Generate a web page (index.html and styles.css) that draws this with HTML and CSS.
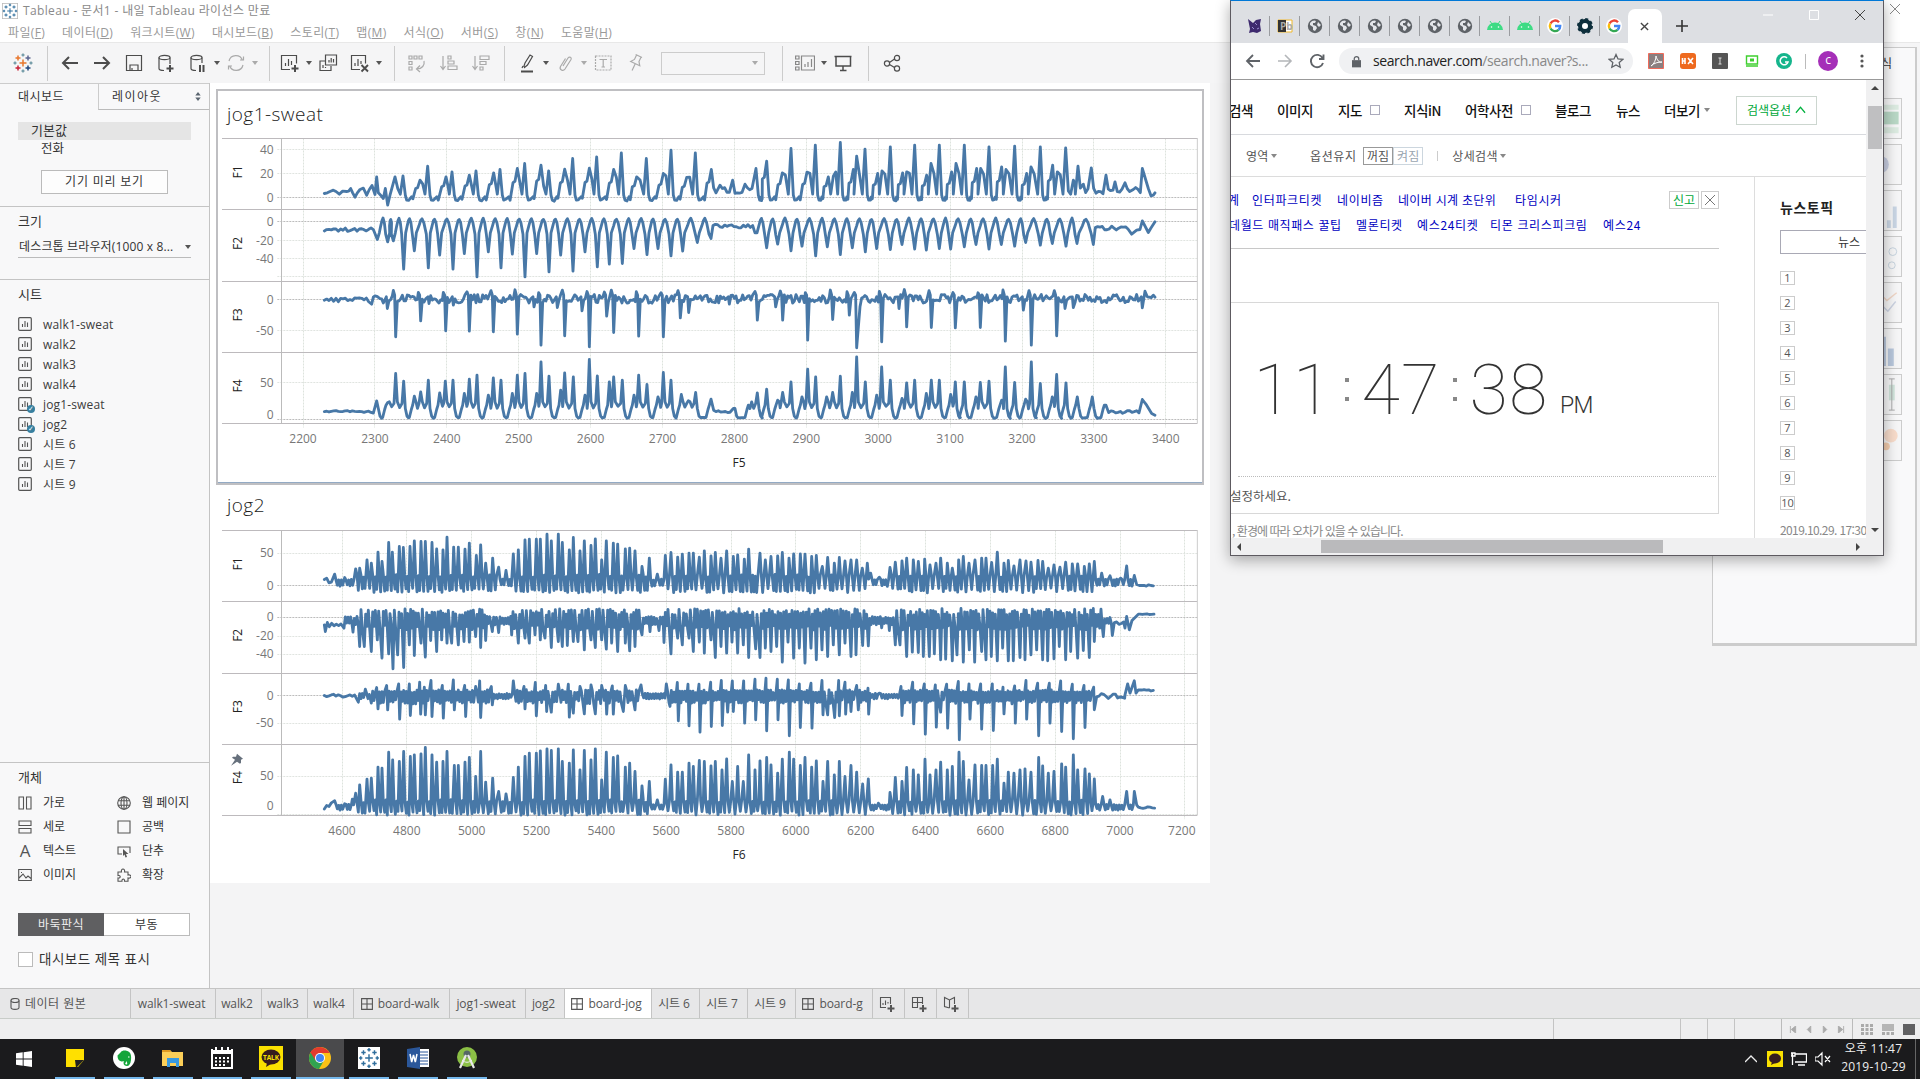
FILE: index.html
```html
<!DOCTYPE html>
<html lang="ko">
<head>
<meta charset="utf-8">
<title>Tableau - 문서1</title>
<link rel="stylesheet" href="styles.css">
</head>
<body>
<svg width="0" height="0" class="defs">
  <defs>
    <symbol id="sheet" viewBox="0 0 14 14"><rect x=".7" y=".7" width="12.6" height="12.6" rx="1" fill="none" stroke="currentColor" stroke-width="1.2"/><path d="M4.5 10V7M7 10V4M9.5 10V5.5" stroke="currentColor" stroke-width="1.1"/></symbol>
    <symbol id="board" viewBox="0 0 12 12"><path d="M.6.6h10.8v10.8H.6zM6 .6v10.8M.6 6h10.8" fill="none" stroke="currentColor"/></symbol>
    <symbol id="globe" viewBox="0 0 16 16"><circle cx="8" cy="8" r="7.2" fill="#5f6368"/><path d="M3 5c2-3 5-3 6-2l-1 2H6v2l3 1 1 2-2 3-2-1V9L3 7zM11 4l3 3-2 2-2-2z" fill="#e4e6ea"/></symbol>
    <symbol id="droid" viewBox="0 0 16 16"><path d="M0 12a8 7.500 0 0 1 16 0z" fill="#3ddc84"/><path d="M3 3l2 3M13 3l-2 3" stroke="#3ddc84"/><circle cx="4.500" cy="9" r=".8" fill="#fff"/><circle cx="11.500" cy="9" r=".8" fill="#fff"/></symbol>
    <symbol id="goog" viewBox="0 0 16 16"><circle cx="8" cy="8" r="8" fill="#fff"/><g fill="none" stroke-width="2.400"><path d="M12 4.200A5.200 5.200 0 0 0 3.500 5.500" stroke="#ea4335"/><path d="M3.500 5.500a5.200 5.200 0 0 0 0 5" stroke="#fbbc05"/><path d="M3.500 10.500a5.200 5.200 0 0 0 8 1.300" stroke="#34a853"/><path d="M11.500 11.800A5 5 0 0 0 13.200 8H8" stroke="#4285f4"/></g></symbol>
    <symbol id="tab" viewBox="0 0 20 20"><g stroke-width="1.500"><path d="M10 6.500v7M6.500 10h7" stroke="#e8762c"/><path d="M5 2.500v5M2.500 5h5" stroke="#e8762c"/><path d="M15 2.500v5M12.500 5h5" stroke="#5b6591"/><path d="M5 12.500v5M2.500 15h5" stroke="#c72037"/><path d="M15 12.500v5M12.500 15h5" stroke="#1f457e"/><path d="M10 .5v3M8.500 2h3M10 16.500v3M8.500 18h3" stroke="#7099a6"/><path d="M2 8.500v3M.5 10h3M18 8.500v3M16.500 10h3" stroke="#7099a6"/></g></symbol>
    <symbol id="tabb" viewBox="0 0 20 20"><path d="M10 6.500v7M6.500 10h7M5 3v4M3 5h4M15 3v4M13 5h4M5 13v4M3 15h4M15 13v4M13 15h4M10 1v3M8.500 2.500h3M10 16v3M8.500 17.500h3M2.500 8.500v3M1 10h3M17.500 8.500v3M16 10h3" stroke="#2f6e9c" stroke-width="1.300"/></symbol>
  </defs>
</svg>

<div class="app">
  <header class="titlebar"><svg class="logo" viewBox="0 0 20 20"><rect x=".5" y=".5" width="19" height="19" fill="#fff" stroke="#bbb"/><use href="#tabb"/></svg><span>Tableau - 문서1 - 내일 Tableau 라이선스 만료</span></header>
  <nav class="menu"><span>파일(<u>F</u>)</span><span>데이터(<u>D</u>)</span><span>워크시트(<u>W</u>)</span><span>대시보드(<u>B</u>)</span><span>스토리(<u>T</u>)</span><span>맵(<u>M</u>)</span><span>서식(<u>O</u>)</span><span>서버(<u>S</u>)</span><span>창(<u>N</u>)</span><span>도움말(<u>H</u>)</span></nav>

  <div class="toolbar">
    <div class="grp g0"><svg viewBox="0 0 20 20"><use href="#tab"/></svg></div>
    <div class="grp g1">
      <svg viewBox="0 0 20 20"><path d="M18 10H3M9 4l-6 6 6 6" stroke-width="2"/></svg>
      <svg viewBox="0 0 20 20"><path d="M2 10h15M11 4l6 6-6 6" stroke-width="2"/></svg>
      <svg viewBox="0 0 20 20"><path d="M2.500 2.500h15v15h-15zM6 17v-5h8v5M8 17v-2"/></svg>
      <svg viewBox="0 0 20 20"><path d="M3 4.500v11c0 1 2 2 5 2M14 4.500V11"/><ellipse cx="8.500" cy="4.500" rx="5.500" ry="2.200"/><path d="M14 12v7M10.500 15.500h7" stroke-width="2"/></svg>
      <svg viewBox="0 0 20 20"><path d="M3 4.500v11c0 1 2 2 5 2M14 4.500V10"/><ellipse cx="8.500" cy="4.500" rx="5.500" ry="2.200"/><path d="M12 12v7M15.500 12v7" stroke-width="2"/></svg>
      <i class="caret"></i>
      <svg class="dim" viewBox="0 0 20 20"><path d="M3 8a7 7 0 0 1 13.500-.5M17 12a7 7 0 0 1-13.500.5M14 7h3.500V3.500M6 13H2.500v3.500"/></svg>
      <i class="caret dim"></i>
    </div>
    <div class="grp g2">
      <svg viewBox="0 0 20 20"><path d="M10 16.500H1.500v-14h15v8M5.500 13v-3M8.500 13V6M11.500 12V8"/><path d="M15 12v7M11.500 15.500h7" stroke-width="2"/></svg>
      <i class="caret"></i>
      <svg viewBox="0 0 20 20"><path d="M7.500 2h11v10h-11zM11 9.500V7M13.200 9.500V5M15.500 9.500V6M7 8H2v9.500h11V13M5 15v-3M7.500 15v-1"/></svg>
      <svg viewBox="0 0 20 20"><path d="M10 16.500H1.500v-14h14v8M5 13v-3M8 13V6M11 11V8"/><path d="M11.500 12l6.500 6.500M18 12l-6.500 6.500" stroke-width="1.900"/></svg>
      <i class="caret"></i>
    </div>
    <div class="grp g3 dim">
      <svg viewBox="0 0 20 20"><path d="M2 3h3v3H2zM7 3h3v3H7zM12 3h3v3h-3zM2 8.500h3v3H2zM2 14h3v3H2zM17 8c1 4-2 8-7 8M13 12.500L9.500 16l3.500 3"/></svg>
      <svg viewBox="0 0 20 20"><path d="M4 3v13M1.500 13L4 16.500 6.500 13M9 3h3v3H9zM9 8h6v3H9zM9 13h9v3.500H9z"/></svg>
      <svg viewBox="0 0 20 20"><path d="M4 3v13M1.500 13L4 16.500 6.500 13M9 3h9v3.500H9zM9 8.500h6v3H9zM9 14h3v3H9z"/></svg>
    </div>
    <div class="grp g4">
      <svg viewBox="0 0 20 20"><path d="M7 13l1-3 5-8 2.500 1.500-5 8.500-3 2.500zM6 13l-1 2"/><path d="M4 18.500h12" stroke-width="2"/></svg>
      <i class="caret"></i>
      <svg class="dim" viewBox="0 0 20 20"><path d="M8 13l5-8c1.500-2 4-.5 3 1.500l-6 9.500c-2 3-6 .5-4.500-2.500l5-8"/></svg>
      <i class="caret dim"></i>
      <svg class="dim" viewBox="0 0 20 20"><rect x="2.500" y="3" width="15.500" height="14" stroke-dasharray="2 1"/><path d="M6.500 6.500h7.500M10.200 6.500V14M8.500 14h3.500"/></svg>
      <svg class="dim" viewBox="0 0 20 20"><g transform="rotate(25 10 10)"><path d="M7 2h7M8 2v5l-2.500 3.500h10L13 7V2M10.500 10.500V18"/></g></svg>
      <div class="select"><i class="caret dim"></i></div>
    </div>
    <div class="grp g5">
      <svg class="mid" viewBox="0 0 20 20"><path d="M.6 3H4v3H.6zM.6 8.500H4v3H.6zM.6 14H4v3H.6zM6.500 3h13v14h-13zM10 14v-3M13 14V9M16.500 14V6"/></svg>
      <i class="caret"></i>
      <svg viewBox="0 0 20 20"><path d="M1.500 3.500h17M3 3.500V13h14.500V3.500M10 13v4.500M7 17.500h6.500" stroke-width="1.500"/></svg>
    </div>
    <div class="grp g6"><svg viewBox="0 0 20 20"><circle cx="5" cy="10.500" r="2.600"/><circle cx="15" cy="5" r="2.600"/><circle cx="15" cy="15.500" r="2.600"/><path d="M7.500 9.500L12.500 6M7.500 11.500l5 3"/></svg></div>
  </div>

  <div class="work">
    <aside class="side">
      <div class="ptabs"><div class="on">대시보드</div><div class="off"><span>레이아웃</span><svg viewBox="0 0 6 10" width="6" height="9"><path d="M3 0l3 4H0zM0 6h6L3 10z" fill="#5a6570"/></svg></div></div>
      <section class="dev"><div class="def">기본값</div><div class="tel">전화</div><div class="btn">기기 미리 보기</div></section>
      <section class="size"><h4>크기</h4><div class="dd"><span>데스크톱 브라우저(1000 x 8...</span><i class="caret"></i></div></section>
      <section class="sheets"><h4>시트</h4><ul>
        <li><svg><use href="#sheet"/></svg>walk1-sweat</li><li><svg><use href="#sheet"/></svg>walk2</li><li><svg><use href="#sheet"/></svg>walk3</li><li><svg><use href="#sheet"/></svg>walk4</li>
        <li class="used"><svg><use href="#sheet"/></svg>jog1-sweat</li><li class="used"><svg><use href="#sheet"/></svg>jog2</li>
        <li><svg><use href="#sheet"/></svg>시트 6</li><li><svg><use href="#sheet"/></svg>시트 7</li><li><svg><use href="#sheet"/></svg>시트 9</li></ul></section>
      <section class="objs"><h4>개체</h4>
        <div class="ogrid">
          <div><svg viewBox="0 0 14 14"><path d="M1 1h4.500v12H1zM8.500 1H13v12H8.500z"/></svg>가로</div><div><svg viewBox="0 0 14 14"><circle cx="7" cy="7" r="6.300"/><ellipse cx="7" cy="7" rx="3" ry="6.300"/><path d="M7 .7v12.600M1 4.700h12M1 9.300h12"/></svg>웹 페이지</div>
          <div><svg viewBox="0 0 14 14"><path d="M1 1h12v4.500H1zM1 8.500h12V13H1z"/></svg>세로</div><div><svg viewBox="0 0 14 14"><path d="M1 1h12v12H1z"/></svg>공백</div>
          <div><span class="A">A</span>텍스트</div><div><svg viewBox="0 0 14 14"><path d="M5 10H1V3h12v6"/><path d="M6 5l5.500 5H9l1 3-1.500.5-1-3L6 12z" fill="#555" stroke="none"/></svg>단추</div>
          <div><svg viewBox="0 0 14 14"><path d="M.7 1.500h12.600v11H.7zM1 10l4-4 3 4 2-2 3 2.500M3 4.500h1"/></svg>이미지</div><div><svg viewBox="0 0 14 14"><path d="M1 4h3.500c-1-4 4-4 3 0H11v3c4-1 4 4 0 3v3.300H7.500c.5-3-3-3-2.500 0H1V10c3 .5 3-3 0-2.500z"/></svg>확장</div>
        </div>
        <div class="seg"><b>바둑판식</b><span>부동</span></div>
        <label class="chk"><i></i>대시보드 제목 표시</label>
      </section>
    </aside>
    <main class="canvas"><div class="dash">
      <div class="zone sel"><h2>jog1-sweat</h2><svg class="chart" id="c1" width="976" height="342"></svg></div>
      <div class="zone"><h2>jog2</h2><svg class="chart" id="c2" width="976" height="342"></svg></div>
    </div></main>
  </div>

  <div class="sheetbar">
    <div class="w130 src"><svg viewBox="0 0 10 12"><ellipse cx="5" cy="2.500" rx="4" ry="2"/><path d="M1 2.500v7c0 2.500 8 2.500 8 0v-7"/></svg>데이터 원본</div>
    <div class="w85">walk1-sweat</div><div class="w46">walk2</div><div class="w46">walk3</div><div class="w46">walk4</div>
    <div class="w96"><svg><use href="#board"/></svg>board-walk</div><div class="w76">jog1-sweat</div><div class="w39">jog2</div>
    <div class="w87 cur"><svg><use href="#board"/></svg>board-jog</div><div class="w48">시트 6</div><div class="w48">시트 7</div><div class="w48">시트 9</div>
    <div class="w77"><svg><use href="#board"/></svg>board-g</div>
    <div class="w32"><svg class="add" viewBox="0 0 16 16"><path d="M7 11.500H1.500v-10h10V8M4 9V7M6.500 9V4.500M9 7.500V6"/><path d="M12 9v7M8.500 12.500h7" stroke-width="2"/></svg></div>
    <div class="w32"><svg class="add" viewBox="0 0 16 16"><path d="M7 11.500H1.500v-10h10V8M1.500 6.500h10M6.500 1.500v10"/><path d="M12 9v7M8.500 12.500h7" stroke-width="2"/></svg></div>
    <div class="w32"><svg class="add" viewBox="0 0 16 16"><path d="M6.500 12L1.500 10.500V1.500L6.500 4l5-2.500V8M6.500 4v8"/><path d="M12 9v7M8.500 12.500h7" stroke-width="2"/></svg></div>
  </div>
  <div class="status"><i class="s127"></i><i class="s27"></i><i class="s27"></i><i class="s47"></i>
    <div class="nav"><svg viewBox="0 0 8 8"><path d="M1 0v8M7 0L2 4l5 4z"/></svg><svg viewBox="0 0 8 8"><path d="M6 0L2 4l4 4z"/></svg><svg viewBox="0 0 8 8"><path d="M2 0l4 4-4 4z"/></svg><svg viewBox="0 0 8 8"><path d="M7 0v8M1 0l5 4-5 4z"/></svg></div>
    <div class="views"><svg viewBox="0 0 12 11"><path d="M0 1.500h12M0 5.500h12M0 9.500h12" stroke="#aaa" stroke-width="3" stroke-dasharray="3 1.500"/></svg><svg viewBox="0 0 12 11"><path d="M0 0h12v7H0z" fill="#b5b5b5"/><path d="M0 9.500h12" stroke="#aaa" stroke-width="3" stroke-dasharray="3 1.500"/></svg><svg viewBox="0 0 12 11"><path d="M0 0h12v11H0z" fill="#606062"/></svg></div>
  </div>

  <footer class="task">
    <div class="ti start"><svg viewBox="0 0 16 16"><path d="M0 2.300L6.700 1.300v6.200H0zM7.600 1.200L16 0v7.500H7.600zM0 8.400h6.700v6.300L0 13.700zM7.600 8.400H16V16l-8.400-1.200z" fill="#fff"/></svg></div>
    <div class="ti run"><svg viewBox="0 0 22 22"><path d="M2 2h18v11l-6 7H2z" fill="#ffe000"/><path d="M11 13h9l-8 8z" fill="#222"/></svg></div>
    <div class="ti run"><svg viewBox="0 0 22 22"><circle cx="11" cy="11" r="11" fill="#fff"/><path d="M4.500 8.500L8 5c1-2 6-2 8 0 2 1 2.500 5 2 8-.5 4-2 6-4 6s-3.500-1-3.500-3 1.500-2 2.500-2v1.500c-1 0-1.200 2 .5 2 1 0 1-2 0-3-1-1-3 0-5 0-3-.5-4-3-4-6z" fill="#14a53a"/><path d="M15 10h1.500" stroke="#fff"/></svg></div>
    <div class="ti run"><svg viewBox="0 0 22 22"><path d="M0 3h8l2 2h11v14H0z" fill="#fccf58"/><path d="M0 3h8l1 2H0z" fill="#e09b22"/><path d="M5 20v-9h12v9h-3v-4H8v4z" fill="#3a9ae0"/></svg></div>
    <div class="ti run"><svg viewBox="0 0 22 22"><path d="M1 2v19h20V2M1 4h20M1 6h20" fill="none" stroke="#fff" stroke-width="2"/><path d="M5 0v5M11 0v5M17 0v5" stroke="#fff" stroke-width="2"/><path d="M4 11h14M4 14.500h14M4 18h10" stroke="#fff" stroke-width="1.800" stroke-dasharray="2 2"/></svg></div>
    <div class="ti run"><svg class="talk" viewBox="0 0 24 24"><path d="M0 0h24v24H0z" fill="#fae100"/><ellipse cx="12" cy="11" rx="9.500" ry="7.500" fill="#371d1e"/><path d="M8 17l-1 4 5-3z" fill="#371d1e"/><text x="12" y="13.500" text-anchor="middle" font-size="6.500" font-weight="700" fill="#fae100">TALK</text></svg></div>
    <div class="ti run active"><svg viewBox="0 0 22 22"><circle cx="11" cy="11" r="11" fill="#fbc116"/><path d="M11 11L1.500 5.500A11 11 0 0 1 20.500 6H11z" fill="#e33b2e"/><path d="M1.500 5.500A11 11 0 0 0 10 22l5-8.500L11 11z" fill="#31a350"/><path d="M1.500 5.500L7 14l4-8h9.500A11 11 0 0 0 1.500 5.500z" fill="#e33b2e"/><circle cx="11" cy="11" r="5" fill="#fff"/><circle cx="11" cy="11" r="4" fill="#4285f4"/></svg></div>
    <div class="ti run"><svg viewBox="0 0 20 20"><path d="M0 0h20v20H0z" fill="#fff"/><use href="#tabb"/></svg></div>
    <div class="ti run"><svg viewBox="0 0 22 22"><path d="M9 2h13v18H9z" fill="#fff"/><path d="M13 5h8M13 8h8M13 11h8M13 14h8M13 17h8" stroke="#2b579a"/><path d="M0 2l13-2v22L0 20z" fill="#2b579a"/><path d="M3 7l1.700 8L6.500 8l1.800 7L10 7" fill="none" stroke="#fff" stroke-width="1.500"/></svg></div>
    <div class="ti run"><svg viewBox="0 0 22 22"><circle cx="11" cy="10" r="10" fill="#8bbf45"/><circle cx="11" cy="7" r="3.500" fill="#566"/><path d="M10 8L4 21M12 8l6 13" stroke="#e8e8e8" stroke-width="2.200"/><path d="M6 13c3 3 7 3 10 0" stroke="#eee" fill="none"/></svg></div>
    <div class="tray"><svg class="up" viewBox="0 0 12 8"><path d="M0 7l6-6 6 6" fill="none" stroke="#eee" stroke-width="1.300"/></svg><svg viewBox="0 0 16 16"><path d="M0 0h16v16H0z" fill="#fae100"/><ellipse cx="8" cy="7.500" rx="6" ry="5" fill="#371d1e"/><path d="M5 11l-1 3 4-2z" fill="#371d1e"/></svg><svg viewBox="0 0 16 16"><path d="M4 3h11.500v8H4M7 14h7M1.500 2v12M0 2h4v3H0z" fill="none" stroke="#fff" stroke-width="1.300"/></svg><svg viewBox="0 0 16 16"><path d="M0 6h3l4-4v12L3 10H0zM10 5l5 6M15 5l-5 6" fill="none" stroke="#fff" stroke-width="1.200"/></svg></div>
    <div class="clock"><span>오후 11:47</span><span>2019-10-29</span></div>
  </footer>
</div>

<svg class="mainx" viewBox="0 0 10 10"><path d="M0 0l10 10M10 0L0 10" stroke="#888"/></svg>
<div class="showme"><h5>표현 방식</h5><div class="thumbs">
  <div><svg viewBox="0 0 34 40"><path d="M4 6h28v5H4zM4 29h28v6H4z" fill="#dcebe1"/><path d="M4 13h28v13H4z" fill="#b9d8c6"/></svg></div>
  <div><svg viewBox="0 0 34 40"><circle cx="13" cy="20" r="9" fill="#c9cfe2"/></svg></div>
  <div><svg viewBox="0 0 34 40"><path d="M20 30h4v8h-4zM26 16h4v22h-4z" fill="#c9d5e4"/></svg></div>
  <div><svg viewBox="0 0 34 40"><circle cx="26" cy="15" r="4" fill="none" stroke="#c5d3de"/><circle cx="25" cy="29" r="3.500" fill="none" stroke="#c5d3de"/></svg></div>
  <div><svg viewBox="0 0 34 40"><path d="M16 14l4 4 10-8" fill="none" stroke="#f0d6c6" stroke-width="1.500"/><path d="M16 24l5 5 8-10" fill="none" stroke="#ccd3e2" stroke-width="1.500"/></svg></div>
  <div><svg viewBox="0 0 34 40"><path d="M21 20h6v18h-6zM15 8h4v30h-4z" fill="#b9c8dd"/></svg></div>
  <div><svg viewBox="0 0 34 40"><path d="M22 10h6v16h-6z" fill="#cfe3da"/><path d="M25 4v32M22 4h6M22 36h6" stroke="#aaa"/></svg></div>
  <div><svg viewBox="0 0 34 40"><circle cx="24" cy="15" r="7" fill="#f8dccb"/><circle cx="19" cy="26" r="4" fill="#f4cdae"/></svg></div>
</div></div>

<div class="browser">
  <div class="strip">
    <div class="fav"><svg viewBox="0 0 16 16"><path d="M1 1l5 4 3-3 5-1-1 5 1 7-4 2-4-1-4 1 1-4z" fill="#3e2a6e"/><path d="M8 5l2 2M5 9l2 2M10 11l2-1" stroke="#9b8fd0"/></svg></div>
    <div class="fav"><svg viewBox="0 0 16 16"><path d="M1 2h14v12H1z" fill="#fff" stroke="#f0b72a"/><path d="M1 2h8v12H1z" fill="#333"/><text x="3" y="12" font-size="10" font-weight="700" fill="#aaa">Pb</text></svg></div>
    <div class="fav"><svg><use href="#globe"/></svg></div><div class="fav"><svg><use href="#globe"/></svg></div><div class="fav"><svg><use href="#globe"/></svg></div><div class="fav"><svg><use href="#globe"/></svg></div><div class="fav"><svg><use href="#globe"/></svg></div><div class="fav"><svg><use href="#globe"/></svg></div>
    <div class="fav"><svg><use href="#droid"/></svg></div><div class="fav"><svg><use href="#droid"/></svg></div><div class="fav"><svg><use href="#goog"/></svg></div>
    <div class="fav"><svg viewBox="0 0 16 16"><circle cx="8" cy="8" r="5" fill="#fff" stroke="#0e2f3c" stroke-width="4"/><circle cx="8" cy="8" r="7" fill="none" stroke="#0e2f3c" stroke-width="2" stroke-dasharray="3 2.500"/></svg></div>
    <div class="fav last"><svg><use href="#goog"/></svg></div>
    <div class="atab"><svg viewBox="0 0 10 10"><path d="M1 1l8 8M9 1L1 9" stroke="#444" stroke-width="1.500"/></svg></div>
    <svg class="plus" viewBox="0 0 12 12"><path d="M6 0v12M0 6h12" stroke="#333" stroke-width="1.600"/></svg>
    <div class="wc"><svg viewBox="0 0 10 10"><path d="M0 5h10" stroke="#fff"/></svg><svg viewBox="0 0 10 10"><path d="M.5.500h9v9h-9z" fill="none" stroke="#fff"/></svg><svg viewBox="0 0 10 10"><path d="M0 0l10 10M10 0L0 10" stroke="#444"/></svg></div>
  </div>
  <div class="addr">
    <svg viewBox="0 0 16 16"><path d="M15 8H2M8 2L2 8l6 6" stroke="#5f6368" stroke-width="1.800"/></svg>
    <svg viewBox="0 0 16 16"><path d="M1 8h13M8 2l6 6-6 6" stroke="#b4b6b9" stroke-width="1.600"/></svg>
    <svg viewBox="0 0 16 16"><path d="M13.500 5A6.200 6.200 0 1 0 14 10M14.500 1.500V6H10" stroke="#5f6368" stroke-width="1.900"/></svg>
    <div class="omni"><svg class="lock" viewBox="0 0 10 13"><path d="M0 5h10v8H0z" fill="#5f6368"/><path d="M2.500 5V3.500a2.500 2.500 0 0 1 5 0V5" stroke="#5f6368" stroke-width="1.400"/></svg><span class="url">search.naver.com<em>/search.naver?s...</em></span><svg viewBox="0 0 16 16"><path d="M8 1.500l2 4.400 4.800.5-3.600 3.200 1 4.700L8 11.900l-4.200 2.400 1-4.700L1.200 6.400 6 5.900z" stroke="#5f6368" stroke-width="1.300"/></svg></div>
    <svg viewBox="0 0 16 16"><path d="M.5.500h15v15H.5z" fill="#8a7f80" stroke="#f06a5a"/><path d="M3 13c3-2 5-6 5-10 1 4 3 7 6 6-4 0-8 1-11 4" stroke="#fff"/></svg>
    <svg viewBox="0 0 16 16"><rect width="16" height="16" rx="3" fill="#ee6a1f"/><path d="M2.500 5v6M5 5v6M2 8h3M8 5l5 6M13 5l-5 6" stroke="#fff" stroke-width="1.600"/></svg>
    <svg viewBox="0 0 16 16"><rect width="16" height="16" rx="1" fill="#555"/><path d="M8 5v6M6.500 5h3M6.500 11h3" stroke="#ddd"/></svg>
    <svg viewBox="0 0 16 16"><path d="M2.500 3h11v8h-11zM2 13h12" stroke="#3fcf2f" stroke-width="1.400"/><path d="M6 5.500h4v3H6z" fill="#3fcf2f"/></svg>
    <svg viewBox="0 0 16 16"><circle cx="8" cy="8" r="8" fill="#15b58c"/><path d="M11 5a4 4 0 1 0 1 4H9" stroke="#fff" stroke-width="1.500"/></svg>
    <i class="vs"></i><span class="ava">c</span>
    <svg class="dots" viewBox="0 0 4 16"><circle cx="2" cy="3" r="1.600" fill="#555"/><circle cx="2" cy="8" r="1.600" fill="#555"/><circle cx="2" cy="13" r="1.600" fill="#555"/></svg>
  </div>
  <div class="view">
    <div class="page">
      <div class="gnb"><span class="n0">검색</span><span class="n1">이미지</span><span class="n2">지도<i></i></span><span class="n3">지식iN</span><span class="n4">어학사전<i></i></span><span class="n5">블로그</span><span class="n6">뉴스</span><span class="n7">더보기<b class="tri"></b></span><span class="opt">검색옵션<svg viewBox="0 0 12 8"><path d="M1 7l5-6 5 6" fill="none" stroke="#00b13e" stroke-width="1.300"/></svg></span></div>
      <div class="opts"><span class="o1">영역<b class="tri"></b></span><span class="o2">옵션유지</span><span class="tg"><b>꺼짐</b><em>켜짐</em></span><i></i><span class="o3">상세검색<b class="tri"></b></span></div>
      <div class="cols">
        <div class="left">
          <div class="rel"><div class="lk r1"><a>계</a><a class="l1">인터파크티켓</a><a class="l2">네이비즘</a><a class="l3">네이버 시계 초단위</a><a class="l4">타임시커</a><span class="rep">신고</span><span class="cls"><svg viewBox="0 0 10 10"><path d="M0 0l10 10M10 0L0 10" stroke="#777"/></svg></span></div>
            <div class="lk r2"><a class="m0">데월드 매직패스 꿀팁</a><a class="m1">멜론티켓</a><a class="m2">예스24티켓</a><a class="m3">티몬 크리스피크림</a><a class="m4">예스24</a></div></div>
          <div class="time"><div class="face"><span>1</span><span>1</span><i></i><span>4</span><span>7</span><i></i><span>3</span><span>8</span><em>PM</em></div><p>설정하세요.</p></div>
          <p class="note">, 환경에 따라 오차가 있을 수 있습니다.</p>
        </div>
        <div class="right"><h6>뉴스토픽</h6><div class="ntab">뉴스</div><ol><li>1</li><li>2</li><li>3</li><li>4</li><li>5</li><li>6</li><li>7</li><li>8</li><li>9</li><li>10</li></ol><p>2019.10.29. 17:30</p></div>
      </div>
    </div>
    <div class="vbar"><i class="au"></i><div></div><i class="ad"></i></div>
  </div>
  <div class="hbar"><i class="al"></i><div></div><i class="ar"></i></div>
</div>
<script src="charts.js"></script>
</body>
</html>
```
FILE: styles.css
```css
*{box-sizing:border-box}
body{margin:0;width:1920px;height:1079px;overflow:hidden;position:relative;font:12px/16px "Open Sans","Noto Sans CJK KR",sans-serif;color:#333;background:#f4f4f5}
h2,h4,h5,h6,p,ul,ol{margin:0;padding:0;font-weight:400}
ul,ol{list-style:none}
svg{display:block;flex:none}
.defs{position:absolute}
.app{display:flex;flex-direction:column;height:1079px}
.titlebar{height:21px;background:#fff;display:flex;align-items:center;gap:5px;padding-left:2px;color:#8a8a8a;letter-spacing:.35px}
.logo{width:16px;height:16px}
.menu{height:21px;background:#fff;display:flex;align-items:center;padding:2px 0 0 8px;gap:17px;color:#999;white-space:nowrap;letter-spacing:.35px}
.toolbar{height:41px;background:#f5f5f6;border-top:1px solid #e8e8e8;display:flex;align-items:center}
.grp{display:flex;align-items:center;gap:12px;height:35px;border-right:1px solid #ccc}
.grp svg{width:20px;height:20px;fill:none;stroke:#4c4c4c;stroke-width:1.2}
.grp .dim,.grp.dim svg{stroke:#aaa;border-top-color:#aaa}
.grp .mid{stroke:#888}
.g0{width:48px;padding-left:13px}.g1{width:222px;padding-left:12px}.g2{width:125px;padding-left:10px}.g3{width:110px;padding-left:12px}.g4{width:278px;padding-left:12px}.g5{width:86px;padding-left:12px}.g6{border:0;padding-left:13px}
.caret{flex:none;width:0;height:0;border:3px solid transparent;border-top:4px solid #555;border-bottom:0;margin:0 -6px 0 -6px}
.select{width:104px;height:23px;border:1px solid #ccc;display:flex;align-items:center;justify-content:flex-end;padding-right:12px;margin-left:4px}
.work{flex:1;display:flex;min-height:0}
.side{width:210px;border-right:1px solid #c4c4c4;background:#f8f8f9;display:flex;flex-direction:column;color:#333}
.ptabs{display:flex;height:27px;border-top:1px solid #ccc}
.ptabs .on{width:98px;padding:5px 0 0 18px;letter-spacing:.5px}
.ptabs .off{flex:1;border-left:1px solid #ccc;border-bottom:1px solid #bbb;padding:5px 8px 0 13px;display:flex;justify-content:space-between;letter-spacing:1.5px}
.ptabs svg{margin-top:3px}
.side section{border-bottom:1px solid #c4c4c4}
.dev{height:97px;padding:12px 18px}
.def{background:#e5e5e5;height:18px;line-height:17px;padding-left:13px;font-size:13px}
.tel{padding-left:23px;height:18px;line-height:18px;font-size:12.500px}
.btn{margin:12px 4px 0 23px;width:127px;height:24px;border:1px solid #bbb;background:#fdfdfd;text-align:center;line-height:21px;letter-spacing:.8px}
.size{height:73px;padding:6px 18px}
h4{font-size:13px;line-height:17px}
.dd{display:flex;align-items:center;justify-content:space-between;border-bottom:1px solid #bbb;height:21px;margin-top:7px;padding:0 6px 0 1px;white-space:nowrap}
.dd span{letter-spacing:.15px}
.sheets{height:483px;padding:6px 18px}
.sheets ul{margin-top:11px}
.sheets li{height:20px;display:flex;align-items:center;gap:11px;position:relative;color:#3c3c3c;padding-top:1px;letter-spacing:.15px}
.sheets li svg{width:14px;height:14px;color:#555;margin-top:-1px}
.used::after{content:"✓";position:absolute;left:9px;top:11px;width:8px;height:8px;border-radius:50%;background:#377f9f;color:#fff;font:7px/8px "DejaVu Sans",sans-serif;text-align:center}
.side .objs{flex:1;border:0;padding:6px 18px}
.ogrid{display:grid;grid-template-columns:98px 1fr;grid-auto-rows:24px;margin-top:5px}
.ogrid div{display:flex;align-items:center;gap:11px;white-space:nowrap;font-size:12px}
.ogrid div:nth-child(even){padding-left:1px}
.ogrid svg{width:14px;height:14px;fill:none;stroke:#555;stroke-width:1.1}
.A{width:14px;font-size:17px;text-align:center;color:#555}
.seg{display:flex;margin-top:26px;height:23px;width:172px;line-height:21px;text-align:center;border:1px solid #bbb;background:#fff;letter-spacing:.4px}
.seg b{width:86px;background:#5f5f61;color:#eee;font-weight:400;margin:-1px 0 -1px -1px;line-height:23px}
.seg span{flex:1}
.chk{display:flex;align-items:center;gap:6px;margin-top:15px;font-size:13.500px;letter-spacing:.5px;white-space:nowrap}
.chk i{width:15px;height:15px;border:1px solid #bbb;background:#fff}
.canvas{flex:1;background:#f4f4f5}
.dash{width:1000px;height:800px;background:#fff;padding:6px}
.zone{width:988px;height:396px;padding:6px 5px;border:1px solid transparent}
.sel{border:2px solid #bfbfc2;padding:5px 4px;box-shadow:inset 0 -1px #93aac4}
.zone h2{font-size:19px;line-height:36px;height:42px;padding-left:5px;color:#222;font-family:"Open Sans",sans-serif;font-weight:300;letter-spacing:.45px}
.zone:not(.sel) h2{margin-top:-6px;height:44px;line-height:38px}
.chart text{font-family:"Open Sans",sans-serif}
.ax{font-size:12px;fill:#777}
.lab{font-size:12px;fill:#222}
.sheetbar{height:30px;border-top:1px solid #c4c4c4;background:#e7e7e8;display:flex;color:#555}
.sheetbar div{flex:none;border-right:1px solid #c4c4c4;display:flex;align-items:center;justify-content:center;gap:5px;white-space:nowrap;padding-right:3px;letter-spacing:-.1px}
.sheetbar .src{justify-content:flex-start;padding-left:9px;gap:4px;letter-spacing:.5px}
.sheetbar svg{width:12px;height:12px;fill:none;stroke:#555;stroke-width:1.1}
.sheetbar .add{width:16px;height:16px}
.sheetbar .cur{background:#fff}
.w130{width:131px}.w85{width:85px}.w46{width:46px}.w96{width:96px}.w76{width:76px}.w39{width:39px}.w87{width:87px}.w48{width:48px}.w77{width:77px}.w32{width:32px}
.status{height:21px;border-top:1px solid #c8ccc8;background:#eeeeef;display:flex;padding-left:1553px}
.status i{border-left:1px solid #c4c4c4}
.s127{width:127px}.s27{width:27px}.s47{width:47px}
.nav{width:71px;border-left:1px solid #bbb;display:flex;align-items:center;gap:8px;padding-left:7px}
.nav svg{width:8px;height:7px;fill:#aaa;stroke:#aaa}
.views{border-left:1px solid #bbb;display:flex;align-items:center;gap:9px;padding-left:8px}
.views svg{width:12px;height:11px}
.task{height:40px;background:#1b1b1d;display:flex}
.ti{width:40px;margin-right:9px;display:flex;align-items:center;justify-content:center;flex:none}
.ti svg{width:22px;height:22px}
.ti .talk{width:24px;height:24px}
.ti.start{width:48px;margin-right:7px}
.start svg{width:16px;height:16px}
.run{border-bottom:2px solid #76b9ed}
.active{width:48px;margin-left:-4px;margin-right:5px;background:#4a4a4c}
.tray{margin-left:auto;display:flex;align-items:center;gap:8px}
.tray svg{width:16px;height:16px}
.tray .up{width:12px;height:8px;margin-right:2px}
.clock{width:78px;margin:0 4px 0 7px;border-right:1px solid #666;color:#eee;display:flex;flex-direction:column;align-items:center;line-height:18px;padding:1px 6px 0 0;letter-spacing:.2px}
.mainx{position:absolute;left:1890px;top:4px;width:10px;height:10px}
.showme{position:absolute;left:1712px;top:47px;width:205px;height:599px;background:#f9f9fa;border:1px solid #ccc;border-right-width:2px;border-bottom:3px solid #ccc}
.showme h5{height:50px;padding:7px 23px;text-align:right;font-size:12px;line-height:17px}
.thumbs{display:flex;flex-direction:column;gap:5px;align-items:flex-end;padding-right:13px}
.thumbs div{width:36px;height:41px;border:1px solid #ccc;background:#f6f6f7}
.thumbs svg{width:34px;height:39px}
.browser{position:absolute;left:1230px;top:0;width:654px;height:556px;border:1px solid #5d5a60;border-top:1px solid #0078d7;background:#fff;display:flex;flex-direction:column;box-shadow:0 4px 14px rgba(0,0,0,.33)}
.strip{height:42px;background:#dddfe3;display:flex;padding-left:9px;align-items:center}
.fav{width:30px;height:20px;margin-top:8px;border-right:1px solid #9a9ca0;display:flex;align-items:center;justify-content:center}
.fav.last{border:0;width:28px}
.fav svg{width:16px;height:16px}
.atab{width:34px;height:34px;margin-top:8px;background:#fff;border-radius:7px 7px 0 0;display:flex;align-items:center;justify-content:center;padding-right:2px}
.atab svg{width:9px;height:9px}
.plus{width:12px;height:12px;margin:8px 0 0 14px}
.wc{display:flex;gap:36px;margin:-14px 18px 0 auto}
.wc svg{width:10px;height:10px}
.addr{height:37px;border-bottom:1px solid #999;display:flex;align-items:center;gap:16px;padding-left:14px}
.addr svg{width:16px;height:16px;fill:none}
.omni{width:294px;height:26px;border-radius:13px;background:#f0f1f3;display:flex;align-items:center;margin:0 -1px 0 -2px;padding:0 9px 0 13px}
.addr .lock{width:9px;height:13px}
.url{flex:1;padding-left:12px;font-size:14px;letter-spacing:-.4px;color:#222}
.url em{font-style:normal;color:#888}
.vs{height:15px;border-left:1px solid #bbb;margin-left:-3px}
.ava{width:20px;height:20px;border-radius:50%;background:#a52fb8;color:#fff;text-align:center;line-height:18px;margin-left:-4px}
.addr .dots{width:4px;margin-left:6px}
.view{display:flex;height:458px}
.page{width:635px;overflow:hidden;white-space:nowrap;font-family:"Noto Sans CJK KR",sans-serif}
.gnb{height:55px;border-bottom:1px solid #d8dade;display:flex;align-items:center;padding-top:6px;font-size:13.500px;color:#111;font-weight:500;letter-spacing:-.4px}
.gnb>span{display:flex;align-items:center;flex:none}
.gnb i{width:10px;height:10px;border:1px solid #aab;margin-left:8px}
.n0{width:46px}.n0{text-indent:-2px}.n1{width:61px}.n2{width:66px}.n3{width:61px}.n4{width:90px}.n5{width:61px}.n6{width:48px}.n7{width:72px}
.tri{border:3px solid transparent;border-top:4px solid #888;border-bottom:0;margin-left:4px}
.gnb .opt{width:81px;height:29px;border:1px solid #ccd6cf;color:#00a83a;font-size:12px;justify-content:center;gap:4px;font-weight:400;letter-spacing:0}
.opt svg{width:11px;height:8px}
.opts{height:42px;border-bottom:1px solid #dcdcdc;display:flex;align-items:center;font-size:12px;color:#555}
.opts span{display:flex;align-items:center}
.opts .tri{margin-left:2px}
.o1{width:64px;margin-left:15px;letter-spacing:.3px}.o2{width:53px;letter-spacing:.6px}.o3{letter-spacing:.4px}
.tg{line-height:16px}
.tg b,.tg em{font:inherit;border:1px solid #999;padding:0 3px;height:18px}
.tg em{color:#9aa5b0;border-color:#ccd6de}
.opts i{height:10px;border-left:1px solid #ccc;margin:0 14px}
.cols{display:flex}
.left{width:523px;height:361px}
.rel{width:488px;height:72px;border-bottom:1px solid #c8c8c8;padding-top:10px}
.lk{display:flex;height:25px;align-items:center;font-size:12px;color:#0000bf}
.lk a{flex:none;letter-spacing:.65px}
.r1 a:first-child{width:21px;text-indent:-3px}.l1{width:85px}.l2{width:61px}.lk .l3{width:117px;letter-spacing:.3px}.l4{width:154px}
.rep,.cls{height:18px;border:1px solid #ccc;line-height:15px;color:#00a83a}
.rep{width:30px;text-align:center;margin-right:2px}
.cls{width:18px;padding:3px}
.lk .m0{width:125px;text-indent:-2px;letter-spacing:.6px}.m1{width:61px}.m2{width:73px}.m3{width:113px}
.time{width:488px;height:212px;margin-top:53px;border:1px solid #d8d8d8;border-left:0;padding-left:7px}
.face{height:174px;margin-right:2px;border-bottom:1px dotted #bbb;display:flex;align-items:center;padding:0 0 0 15px;color:#333}
.face span{font:100 70px/70px Roboto,sans-serif;width:39.500px;text-align:center}
.face i{width:4px;height:23px;border:solid #888;border-width:4px 0;margin:0 12px 0 13px}
.face em{font:300 23px/23px Roboto,sans-serif;letter-spacing:-.7px;padding:32px 0 0 12px}
.time p{margin-left:-8px;line-height:38px;color:#555;font-size:12.500px}
.note{font-size:12px;line-height:34px;color:#888;letter-spacing:-.95px;padding-left:1px}
.right{width:112px;height:361px;border-left:1px solid #ddd;padding:21px 0 0 25px;overflow:hidden}
.right h6{font-size:14px;line-height:18px;font-weight:700;color:#222;letter-spacing:.5px}
.ntab{margin-top:14px;height:24px;border:1px solid #a9a9b5;border-right:0;text-align:right;padding-right:7px;line-height:22px;width:87px}
.right ol{margin-top:17px}
.right li{width:15px;height:14px;border:1px solid #ccc;margin-bottom:11px;text-align:center;font:11px/12px "Open Sans",sans-serif;color:#555}
.right p{font-size:12px;line-height:14px;color:#888;letter-spacing:-.6px;margin-top:13px}
.vbar{width:17px;background:#f0f0f1;display:flex;flex-direction:column;align-items:center;padding:6px 0}
.vbar div{width:14px;height:43px;background:#bfbfc1;margin:16px 0 auto}
.vbar i,.hbar i{border:4px solid transparent}
.vbar .au{border-bottom-color:#444;border-top:0}.vbar .ad{border-top-color:#444;border-bottom:0}
.hbar{height:17px;background:#f0f0f1;display:flex;align-items:center;padding:0 23px 0 6px}
.hbar div{width:342px;height:13px;background:#bababc;margin:0 auto 0 80px}
.hbar .al{border-right-color:#444;border-left:0}.hbar .ar{border-left-color:#444;border-right:0}
```
FILE: charts.js
```js
// Chart geometry is kept in thirds of a pixel and scaled down when drawn.
let seed = 7;
const rnd = () => (seed = (seed * 1103515245 + 12345) % 2147483648) / 2147483648;
const parse = s => s.trim().split(/\s+/).map(p => p.split(',').map(Number));
const join = (a, b) => parse(a).concat(parse(b).map(([x, y]) => [x + 1470, y]));
const SX = 36;

function quiet(from, to, y, amp) {
  const out = [];
  for (let x = from; x < to; x += 7) out.push([x, y + (rnd() - .5) * amp * 2]);
  return out;
}
function fill(tips, mode) {
  const out = [];
  for (let i = 0; i < tips.length; i++) {
    const [x, y] = tips[i];
    if (i) {
      const px = tips[i - 1][0], g = x - px;
      mode(px, x, g, out, tips[i - 1][1], y);
    }
    out.push([x, y]);
  }
  return out;
}
const strideUp = (px, x, g, o, py, y) => {
  if (px > 2600 || (px > 1500 && px < 1630)) {
    for (let k = px + 7; k < x - 5; k += 7) o.push([k, 322 + rnd() * 20]);
    return;
  }
  if (g <= 30) { o.push([px + g * .35, (y + 340) / 2 + 12], [x - 8, 342]); return; }
  o.push([px + 7, 345], [px + 11, 360], [px + 17, 357 + rnd() * 6], [px + g * .5, 350], [px + g * .58, 354 + rnd() * 6]);
  const h = 350 - y; o.push([x - 13, 350 - h * .5], [x - 7, 350 - h * .55]);
};
const dome = (px, x, g, o) => {
  if (px > 2640) { for (let k = px + 6; k < x - 5; k += 7) o.push([k, 438 + rnd() * 14]); return; }
  if (g > 60) { for (let k = px + 6; k < x - 5; k += 7) o.push([k, 432 + rnd() * 12]); return; }
  o.push([px + 6, 458], [px + g * .33, 437], [px + g * .45, 421], [px + g * .55, 413 + rnd() * 5], [px + g * .68, 428], [x - 6, 462]);
};
const jitter = (px, x, g, o, py, y) => {
  for (let k = px + 5; k < x - 9; k += 5) o.push([k, 656 + (rnd() - .5) * 26]);
  if (y > 700) o.push([x - 7, 628 + rnd() * 10], [x - 3, 645]);
  if (g > 12) o.push([x - 3, 650]);
};
const pulse = (px, x, g, o, py, y) => {
  if (px > 2650 || g > 60) { for (let k = px + 8; k < x - 8; k += 7) o.push([k, 990 + rnd() * 10]); return; }
  if (g <= 26) { o.push([px + 5, 965], [px + g * .5, 978 + rnd() * 8], [x - 5, 970]); return; }
  o.push([px + 5, 985], [px + 10, 1008], [px + 15, 1012 + rnd() * 3], [x - 15, 1012], [x - 9, 988], [x - 5, 975]);
};
// Dense signal: a tight zigzag band between the tall spikes.
const band = (lo, hi, rest, still = 36, vary = 9) => (px, x, g, o, py, y) => {
  const calm = g > 35 || px > 2665 || Math.min(Math.abs(y - rest), Math.abs(py - rest)) < still;
  let up = false;
  for (let k = px + 4; k < x - 2; k += 4) {
    up = !up;
    const t = up ? hi - (rnd() - .3) * vary : lo + rnd() * 14;
    o.push([k, calm ? rest + (t - rest) * .4 : t]);
  }
};
const sorted = a => a.sort((p, q) => p[0] - q[0]);

const one = [
  [...parse('343,340 352,338 360,334 370,330 378,334 388,342 398,333 410,334 416,333 422,325 428,338 435,351 442,338 450,328 460,324 470,345 478,328 486,316 495,343 500,290 505,338 512,345 520,355 526,325 533,375 540,345'),
   ...fill(join('555,290 579,287 630,300 653,258 708,290 726,275 778,285 798,272 851,278 870,268 922,265 944,250 993,255 1016,272 1064,267 1088,235 1138,264 1160,230 1211,268 1234,218 1280,290 1309,235 1360,280 1383,210 1430,292 1456,218 1504,268 1530,315',
    '98,300 135,312 168,265 200,243 247,278 273,205 321,276 346,195 385,290 400,288 421,187 460,268 470,228 495,207 533,280 546,272 571,200 608,278 620,275 644,195 680,285 693,250 718,195 755,275 768,250 793,195 830,265 842,265 867,200 905,260 918,268 944,198 980,280 993,260 1021,200 1058,255 1072,275 1097,203 1120,300 1134,258 1150,312 1174,263 1218,285 1245,305 1275,308 1300,328 1327,265'), strideUp),
   [2815, 325], [2823, 347], [2830, 345], [2835, 338]],
  [...quiet(343, 495, 449, 6),
   ...fill(join('502,478 533,485 550,482 581,567 613,512 655,563 689,525 729,567 763,520 801,590 835,515 873,563 907,522 945,590 980,520 1017,575 1052,525 1089,573 1125,515 1162,560 1198,552 1237,550 1272,505 1311,523 1344,505 1383,527 1418,513 1462,487 1503,475',
    '165,458 200,503 233,492 273,512 306,498 347,527 382,500 421,523 457,503 496,515 530,505 571,508 606,493 644,507 679,510 718,505 752,507 793,500 828,493 867,507 904,493 944,498 977,487 1021,495 1057,490 1098,498 1131,490 1180,493 1295,462'), dome),
   [2780, 450], [2790, 448], [2797, 422], [2815, 457], [2822, 445], [2835, 425]],
  [...quiet(343, 478, 659, 6),
   ...fill(join('485,672 532,685 557,770 632,722 657,670 707,752 730,675 778,753 850,755 922,762 972,680 993,795 1042,682 1064,767 1116,692 1138,800 1190,708 1211,757 1286,768 1360,770 1411,713 1436,697 1558,672',
    '172,720 227,680 248,720 323,780 398,718 448,705 470,803 480,680 545,785 597,685 620,740 694,742 766,743 841,742 916,783 970,690 994,795 1070,767 1095,685 1120,682 1327,683'), jitter),
   [2805, 633], [2812, 650], [2824, 652], [2830, 645], [2835, 651]],
  [...quiet(343, 495, 995, 4),
   ...fill(join('500,962 533,967 557,880 581,903 613,948 632,935 655,900 689,938 706,903 729,900 763,940 778,897 801,885 835,945 850,893 873,900 907,940 922,885 945,880 980,940 993,845 1017,888 1052,930 1064,878 1090,890 1125,945 1138,838 1162,887 1198,905 1211,890 1237,900 1272,945 1286,885 1311,913 1344,950 1360,877 1383,900 1414,943 1435,962 1457,937 1503,957',
    '100,985 150,985 172,938 200,927 233,960 248,937 273,905 306,950 323,867 347,890 380,950 398,937 421,888 457,937 470,830 496,905 530,945 545,860 571,900 606,955 620,908 644,900 679,940 694,900 718,900 752,943 766,905 793,905 828,950 841,907 867,903 905,960 916,860 944,907 977,957 994,845 1021,910 1057,950 1070,883 1098,908 1132,950 1177,950 1218,975 1327,958'), pulse),
   [2810, 975], [2825, 1000], [2835, 1005]]
];

const two = [
  [...quiet(343, 370, 303, 10),
   ...fill(join('374,283 404,293 437,267 449,265 471,240 484,250 504,217 516,245 536,188 547,217 568,200 580,203 600,200 613,183 633,185 646,185 666,188 680,207 699,210 711,172 731,202 745,202 765,208 778,190 799,227 812,195 827,250 848,235 866,262 888,272 910,222 925,210 945,180 958,178 979,178 991,178 1011,163 1024,183 1045,163 1057,188 1078,210 1090,173 1110,213 1123,183 1143,197 1156,177 1175,240 1189,183 1210,190 1223,193 1246,207 1259,205 1275,213 1296,260 1318,235 1342,283 1366,227 1383,218 1403,232 1417,223 1437,220 1450,220 1468,232',
    '13,213 33,228 46,218 63,235 80,213 100,230 113,225 133,238 146,208 180,220 196,240 213,230 233,228 247,218 267,235 281,222 301,222 315,223 335,230 349,227 367,260 383,233 403,250 418,233 435,243 453,240 470,240 487,265 502,250 512,280 538,292 570,263 586,247 606,243 620,235 640,240 655,245 674,238 690,255 708,250 722,235 742,250 757,265 776,240 790,230 807,250 825,240 845,235 858,235 875,248 892,217 912,250 925,242 942,258 960,240 978,243 993,247 1014,242 1028,245 1045,265 1062,255 1080,262 1097,247 1117,252 1133,252 1153,260 1168,252 1183,245 1205,280 1230,288 1262,295 1280,258 1303,287'), band(325, 290, 307)),
   [2780, 314], ...quiet(2788, 2835, 317, 2)],
  [[343, 435], [346, 455], [352, 428], ...quiet(358, 400, 434, 7),
   ...fill(join('402,445 429,457 449,500 463,500 484,515 502,480 516,535 536,522 549,567 563,525 581,563 598,495 613,527 633,490 646,532 662,482 680,515 695,480 711,490 725,490 745,495 762,485 778,487 797,470 812,503 827,482 847,455 866,458 905,465 925,490 945,475 958,490 975,465 991,480 1005,475 1024,503 1045,485 1057,500 1072,497 1090,485 1104,485 1123,510 1143,480 1156,503 1175,480 1189,508 1205,490 1223,515 1246,490 1259,513 1275,500 1296,465 1320,455 1347,452 1362,488 1383,522 1403,475 1417,495 1437,475 1450,515 1468,487',
    '13,520 33,480 46,533 63,500 80,520 96,487 113,520 130,495 146,533 167,507 180,533 196,505 213,515 230,500 247,547 264,487 281,535 298,505 315,550 333,505 349,540 366,510 383,530 400,495 418,525 435,490 453,530 468,525 488,497 505,498 545,444 568,452 586,495 600,495 620,530 637,517 655,518 670,530 688,530 703,522 722,540 737,538 757,543 771,525 790,547 808,510 824,547 845,515 858,540 874,530 892,543 908,505 925,543 940,543 960,533 975,540 993,525 1010,510 1028,540 1043,543 1062,537 1078,500 1097,540 1112,515 1133,535 1150,512 1168,533 1183,485 1210,470 1237,467'), band(436, 400, 425, 36, 20)),
   ...quiet(2713, 2745, 436, 12), [2745, 445], [2750, 410], [2758, 450], [2766, 422], [2776, 412], [2785, 403], ...quiet(2790, 2835, 403, 2)],
  [...quiet(343, 440, 648, 5),
   ...fill(sorted(join('466,628 500,623 530,617 566,612 598,612 629,607 643,622 663,602 697,617 730,600 764,617 797,620 809,603 844,620 910,603 942,620 976,608 1007,617 1045,613 1075,613 1110,620 1143,615 1175,617 1207,618 1246,617 1293,615 1369,612 1402,608 1434,613 1467,613 445,667 484,670 504,687 533,690 569,718 601,707 632,703 646,705 666,710 700,715 733,690 767,710 812,713 847,675 945,687 979,708 1010,695 1024,697 1078,712 1090,700 1123,702 1156,702 1190,703 1210,703 1240,695 1275,690 1380,680 1405,723 1437,738',
    '32,607 64,602 97,603 131,603 165,598 198,595 232,598 265,600 298,612 333,610 366,602 416,602 435,607 470,617 504,625 538,640 603,620 638,607 673,612 706,615 740,613 775,605 807,612 842,612 877,612 909,622 944,618 978,602 1013,610 1048,610 1082,603 1117,613 1152,617 1181,622 0,757 34,740 67,737 83,697 100,695 134,730 167,720 200,753 234,720 268,768 301,743 336,745 369,705 383,705 404,713 418,708 437,703 453,695 475,690 506,703 555,656 606,707 641,732 676,763 709,742 722,697 743,745 778,780 810,718 845,748 880,752 912,702 946,730 980,718 1016,768 1050,730 1085,755 1120,777 1155,743 1183,690')), band(658, 636, 648, 22)),
   ...quiet(2660, 2745, 648, 8), [2745, 645], [2753, 612], [2760, 640], [2773, 603], [2778, 640], [2785, 630], ...quiet(2795, 2835, 631, 3)],
  [...quiet(343, 370, 978, 10),
   ...fill(join('374,963 404,972 427,958 437,940 449,915 471,898 484,895 504,862 516,865 536,817 548,840 568,845 581,815 601,830 613,825 633,822 646,803 666,825 680,847 699,845 711,815 733,857 745,857 765,847 778,833 797,890 812,815 827,907 848,895 866,935 888,942 910,893 925,862 945,830 958,820 979,820 991,813 1011,807 1024,812 1045,807 1057,845 1078,850 1090,810 1110,870 1123,812 1143,840 1156,807 1175,900 1189,817 1210,833 1223,828 1246,862 1259,850 1275,875 1296,918 1318,905 1342,960 1366,898 1383,855 1403,877 1417,877 1437,850 1450,860 1468,842',
    '13,845 33,858 46,845 66,870 80,837 97,905 113,860 130,905 146,825 165,870 180,843 200,833 213,855 233,880 247,838 268,817 281,838 301,857 315,833 335,862 349,843 369,905 383,845 403,885 418,845 435,890 453,857 470,877 488,912 505,897 535,970 570,938 586,893 606,905 620,863 640,870 655,885 675,838 690,885 708,870 722,847 742,870 757,860 777,817 790,845 807,900 825,855 845,857 858,857 878,857 892,838 912,910 925,877 942,880 960,870 975,867 993,877 1016,833 1028,858 1045,880 1062,875 1085,852 1097,862 1120,825 1133,870 1155,867 1168,882 1183,897 1208,950 1230,960 1280,935 1303,935'), band(992, 966, 982)),
   [2780, 975], ...quiet(2785, 2835, 983, 3)]
];

function draw(id, top, rows, series, ys, xs, axisName, pin) {
  const L = [];
  const Y = y => (y - top) / 3 + .5, X = x => (x - SX) / 3;
  const row = y => Math.floor(Y(y)) + .5;
  const line = (a, b, c, d, col, extra = '') => L.push(`<path d="M${a} ${b}L${c} ${d}" stroke="${col}" ${extra}/>`);
  xs.forEach(([x]) => line(Math.floor(X(x)) + .5, .5, Math.floor(X(x)) + .5, Y(rows[4]) + 4, '#dde3dd', 'stroke-dasharray="2 1"'));
  ys.forEach(([y, t, zero, ty]) => {
    line(X(202), row(y), X(2962), row(y), zero ? '#bcbcbc' : '#e0e4e0', 'stroke-dasharray="2 1"');
    if (t) L.push(`<text class="ax" x="${X(191)}" y="${Y(ty || y) + 4}" text-anchor="end">${t}</text>`);
  });
  rows.forEach(r => line(0, row(r), X(2962), row(r), '#bdbabd'));
  line(59.5, 0, 59.5, Y(rows[4]), '#bbb');
  line(X(2962), 0, X(2962), Y(rows[4]), '#ccc');
  series.forEach(s => L.push(`<polyline transform="translate(${-SX / 3} ${-top / 3 + .5}) scale(.33333)" points="${s.map(p => p[0].toFixed(1) + ',' + p[1].toFixed(1)).join(' ')}" fill="none" stroke="#4878a7" stroke-width="8.500" stroke-linejoin="round" stroke-linecap="round"/>`));
  for (let i = 0; i < 4; i++) {
    const cy = Y((rows[i] + rows[i + 1]) / 2) + (pin && i === 3 ? -2 : -2);
    L.push(`<text class="lab" transform="translate(20 ${cy}) rotate(-90)" text-anchor="middle">F${i + 1}</text>`);
  }
  if (pin) L.push(`<path transform="translate(9 ${Y(822)})" d="M6 0l6 5-2 1v3l-1 1-3-2-6 4 4-6-3-2 1-1h3z" fill="#66707c"/>`);
  xs.forEach(([x, t]) => L.push(`<text class="ax" x="${X(x) - (t === 7200 ? 3 : 0)}" y="${Y(rows[4]) + 19.5}" text-anchor="middle">${t}</text>`));
  L.push(`<text class="lab" x="${X(1587)}" y="${Y(rows[4]) + 43.500}" text-anchor="middle">${axisName}</text>`);
  document.getElementById(id).innerHTML = L.join('');
}
draw('c1', 175, [175, 388, 604, 817, 1030], one,
  [[208, '40'], [280, '20'], [352, '0', 1], [424, '0', 1], [481, '-20'], [535, '-40'], [589, ''], [658, '0', 1], [751, '-50'], [907, '50'], [1018, '0', 1, 1003]],
  Array.from({ length: 13 }, (_, i) => [279 + i * 215.7, 2200 + i * 100]), 'F5');
draw('c2', 152, [152, 365, 580, 793, 1006], two,
  [[220, '50'], [317, '0', 1], [412, '0', 1], [469, '-20'], [523, '-40'], [647, '0', 1], [730, '-50'], [889, '50'], [1003, '0', 0, 979]],
  Array.from({ length: 14 }, (_, i) => [396 + i * 194.5, 4600 + i * 200]), 'F6', true);
```
